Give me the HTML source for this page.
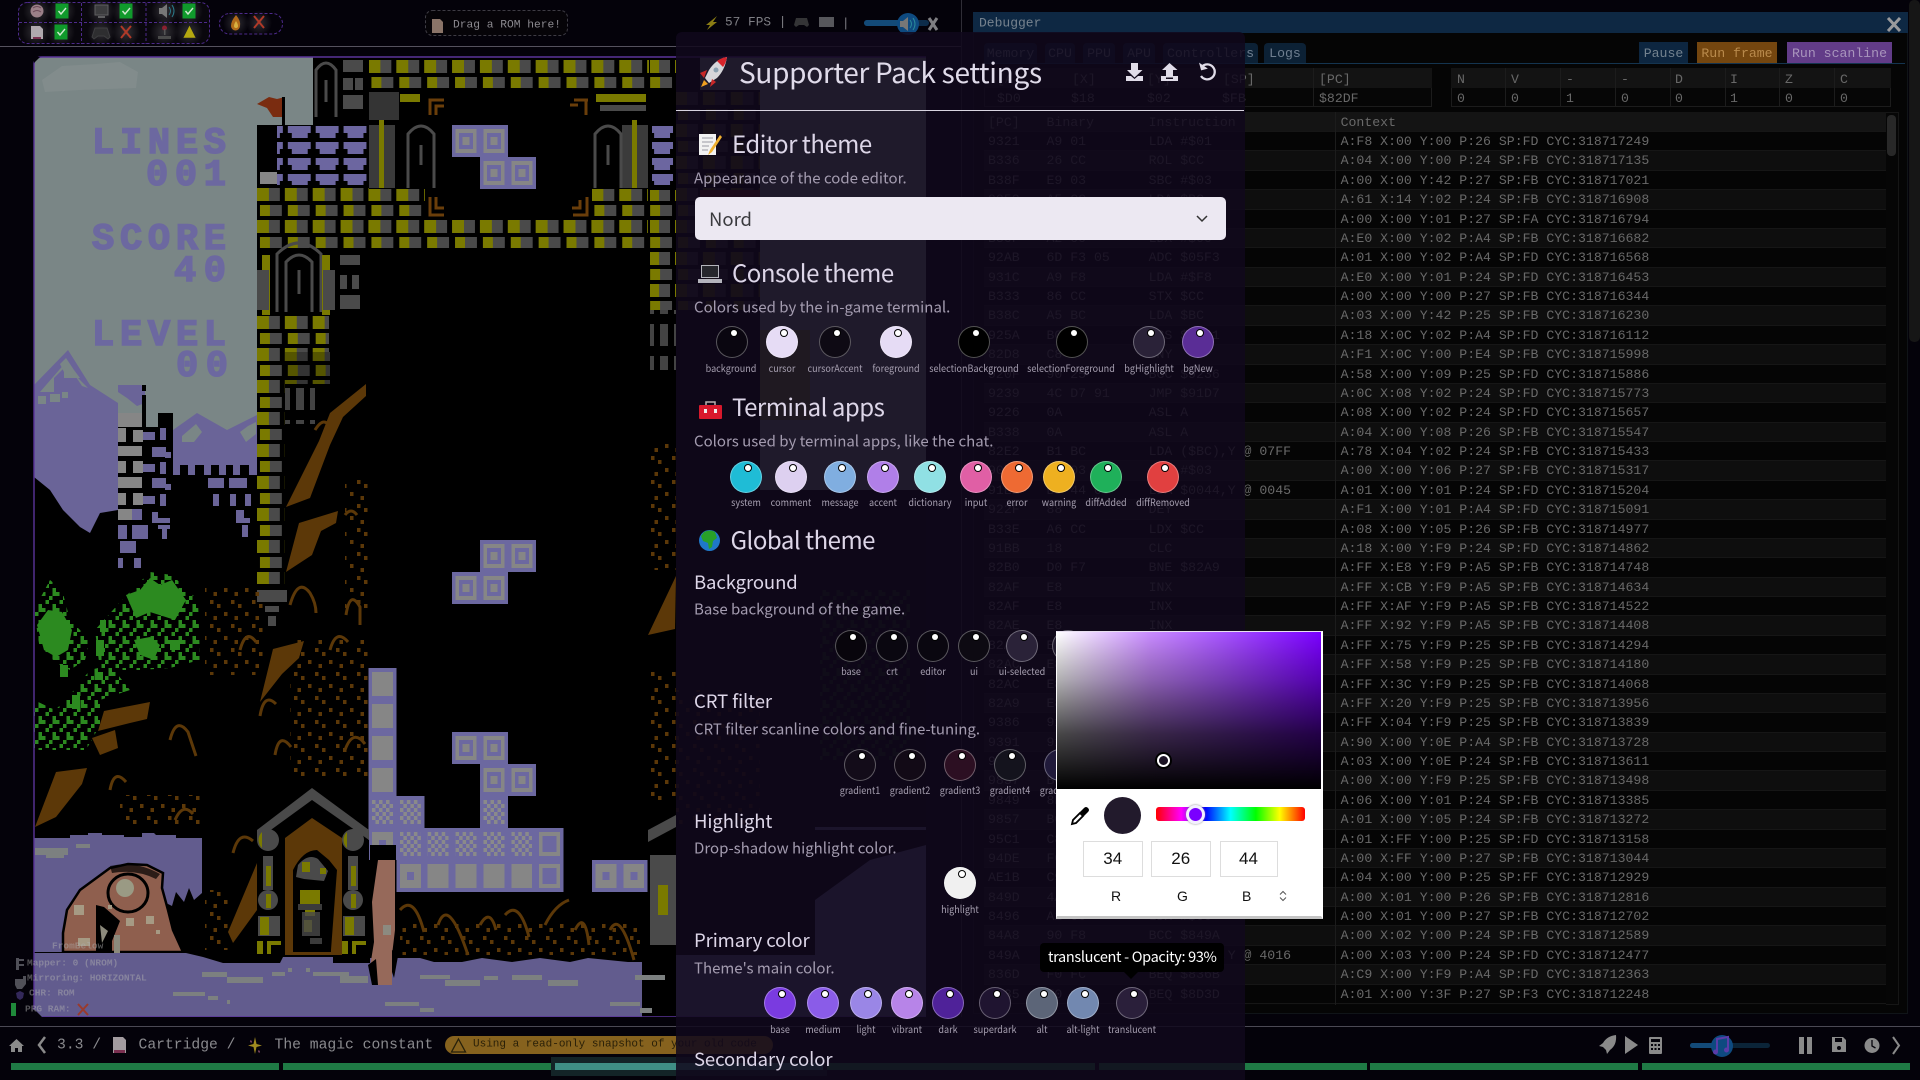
<!DOCTYPE html>
<html><head><meta charset="utf-8"><title>Supporter Pack settings</title>
<style>
*{box-sizing:border-box}
html,body{margin:0;padding:0;width:1920px;height:1080px;overflow:hidden;background:#04020a}
body{position:relative;font-family:"Liberation Sans",sans-serif}
.t{position:absolute;white-space:nowrap;line-height:1;transform:translateY(-50%)}
.m{font-family:"Liberation Mono",monospace}
.n{font-family:"Noto Sans CJK JP","Liberation Sans",sans-serif}
.a{position:absolute}
#dbg{left:973px;top:12px;width:935px;height:1002px;background:#050505;border:1px solid #101418}
#dbgtitle{left:973px;top:12px;width:935px;height:21px;background:#0e2843}
.tab{position:absolute;top:43px;height:20px;background:#0c2135;color:#6f7f90;font:13.2px/22px "Liberation Mono",monospace;text-align:center;border-radius:4px 4px 0 0}
.btn{position:absolute;top:42px;height:21px;font:13.2px/23px "Liberation Mono",monospace;text-align:center}
.reg{position:absolute;font:13.2px/14px "Liberation Mono",monospace;color:#686868;white-space:nowrap}
#log{position:absolute;left:984px;top:112px;width:902px;height:893px;background:#060606;font:13.2px/19.38px "Liberation Mono",monospace;color:#696969;overflow:hidden}
.r{position:relative;height:19.38px;border-bottom:1px solid #161616;background:#050505;white-space:pre}
.r:nth-child(odd){background:#0e0e0e}
.r b{font-weight:normal;position:absolute;top:0}
.r b:nth-child(1){left:4px}.r b:nth-child(2){left:62.5px}.r b:nth-child(3){left:164.6px}.r b:nth-child(4){left:356.6px}
#modal{position:absolute;left:676px;top:32px;width:568.5px;height:1048px;background:rgba(16,8,28,.86);border-radius:6px 6px 0 0}
.s{position:absolute;width:32px;height:32px;border-radius:50%;transform:translate(-50%,-50%);border:1px solid rgba(255,255,255,.32)}
.s::after{content:"";position:absolute;left:13.5px;top:3px;width:6px;height:6px;border-radius:50%;background:#fff;box-shadow:0 0 0 1px #000}
.l{position:absolute;transform:translate(-50%,-50%) scaleX(.88);white-space:nowrap;font:10.3px/1 "Noto Sans CJK JP","Liberation Sans",sans-serif;color:#a69fb0}
.h2{color:#ddd6e8;font-size:24px;letter-spacing:-.5px}
.h3{color:#ddd6e8;font-size:18.5px;letter-spacing:-.1px}
.d{color:#a49cb0;font-size:15px}
#picker{position:absolute;left:1056px;top:631px;width:266.5px;height:288px;background:#fff;border-left:1px solid #fff;border-right:2px solid #fff;border-bottom:3px solid #c4c4c4;border-top:1px solid #e8e0f0}
.in{position:absolute;top:841px;height:36px;border:1px solid #ddd;background:#fff;color:#111;font:17px/34px "Liberation Sans",sans-serif;text-align:center}
.g{position:absolute;white-space:nowrap;line-height:1;transform:translateY(-50%);font-family:"Liberation Mono",monospace;font-size:9.5px;font-weight:bold;color:rgba(175,175,175,.48)}
</style></head><body>

<svg class="a" style="left:0;top:0" width="1920" height="1080" viewBox="0 0 1920 1080">
<defs>
<radialGradient id="glow"><stop offset="0" stop-color="#fff" stop-opacity=".17"/><stop offset="1" stop-color="#fff" stop-opacity="0"/></radialGradient>
<pattern id="brick" patternUnits="userSpaceOnUse" width="27.87" height="32" patternTransform="translate(34,57)" shape-rendering="crispEdges">
<rect x="0" y="3" width="12" height="13" fill="#7a7a00"/><rect x="12" y="3" width="11" height="13" fill="#4a4a4a"/>
<rect x="3" y="20" width="10" height="11" fill="#7a7a00"/><rect x="13" y="20" width="12" height="11" fill="#4a4a4a"/>
</pattern>
<pattern id="lil" patternUnits="userSpaceOnUse" width="27.87" height="16" patternTransform="translate(34,125)" shape-rendering="crispEdges">
<rect x="3" y="1" width="23" height="7" fill="#6c66a0"/><rect x="7" y="8" width="16" height="5" fill="#6c66a0"/>
</pattern>
<pattern id="chk" patternUnits="userSpaceOnUse" width="7" height="8" shape-rendering="crispEdges">
<rect width="3.5" height="4" fill="#8a8a8a"/><rect x="3.5" y="4" width="3.5" height="4" fill="#8a8a8a"/>
</pattern>
<pattern id="gsp" patternUnits="userSpaceOnUse" width="14" height="16" shape-rendering="crispEdges">
<rect x="0" y="0" width="3.5" height="4" fill="#2c8a20"/><rect x="7" y="4" width="3.5" height="4" fill="#2c8a20"/><rect x="3.5" y="8" width="3.5" height="4" fill="#2c8a20"/><rect x="10.5" y="12" width="3.5" height="4" fill="#2c8a20"/><rect x="10.5" y="0" width="3.5" height="4" fill="#2c8a20"/>
</pattern>
<pattern id="bsp" patternUnits="userSpaceOnUse" width="21" height="24" shape-rendering="crispEdges">
<rect x="0" y="0" width="3.5" height="4" fill="#5c3808"/><rect x="7" y="4" width="3.5" height="4" fill="#5c3808"/><rect x="14" y="12" width="3.5" height="4" fill="#5c3808"/><rect x="3.5" y="16" width="3.5" height="4" fill="#5c3808"/>
</pattern>
<pattern id="gsq" patternUnits="userSpaceOnUse" width="14" height="32" shape-rendering="crispEdges">
<rect x="2" y="4" width="8" height="22" fill="#4a4a4a" opacity=".9"/>
</pattern>
<g id="A" shape-rendering="crispEdges"><rect width="27.87" height="32" fill="#6c68a0"/><rect x="3.5" y="4" width="20.9" height="24" fill="#868686"/><rect x="7" y="8" width="13.9" height="16" fill="#6c68a0"/><rect x="10.5" y="12" width="7" height="8" fill="#868686"/></g>
<g id="B" shape-rendering="crispEdges"><rect width="27.87" height="32" fill="#6c68a0"/><rect x="3.5" y="4" width="20.9" height="24" fill="#868686"/></g>
<g id="C" shape-rendering="crispEdges"><rect width="27.87" height="32" fill="#6c68a0"/><rect x="3.5" y="4" width="20.9" height="24" fill="url(#chk)"/></g>
<g id="D" shape-rendering="crispEdges"><rect width="27.87" height="32" fill="#6c68a0"/><rect x="3.5" y="4" width="20.9" height="24" fill="#868686"/><rect x="10.5" y="12" width="7" height="8" fill="#6c68a0"/></g>
<g id="E" shape-rendering="crispEdges"><rect width="27.87" height="32" fill="#6c68a0"/><rect x="3.5" y="4" width="20.9" height="24" fill="#868686"/><rect x="7" y="8" width="13.9" height="16" fill="#6c68a0"/></g>
<g id="chkbox"><rect x="-6.5" y="-7.5" width="13" height="15" fill="#109a2c"/><path d="M-3.5 0l2.5 3 5-6" fill="none" stroke="#cfe8d0" stroke-width="1.4"/></g>
<g id="xx"><path d="M-5 -6L5 6M5 -6L-5 6" stroke="#b03a28" stroke-width="2"/></g>
</defs>

<!-- GAME -->
<g>
<rect x="34" y="57" width="892" height="960" fill="#000"/>
<rect x="34" y="57" width="279" height="68" fill="#7a8686"/>
<rect x="34" y="125" width="223" height="340" fill="#7a8686"/>
<!-- under-modal -->
<rect x="700" y="57" width="226" height="33" fill="#7a8686"/>
<rect x="760" y="90" width="166" height="400" fill="#7a8686"/>
<rect x="815" y="827" width="111" height="190" fill="#5e5a85"/>
<rect x="676" y="955" width="250" height="62" fill="#5e5a85"/>
<path d="M815 900L870 860L926 845V830H815z" fill="#000"/>
<rect x="676" y="690" width="84" height="137" fill="url(#bsp)" opacity=".6"/>
<rect x="676" y="90" width="84" height="220" fill="url(#brick)" opacity=".6"/>
<rect x="700" y="190" width="60" height="40" fill="#5c1a10"/>
<rect x="760" y="330" width="50" height="90" fill="#7a7a00" opacity=".5"/>
<rect x="820" y="590" width="90" height="170" fill="url(#gsp)" opacity=".35"/>
<!-- faint logo -->
<path d="M42 80L62 66L96 64L120 62L138 72L136 88L80 90L45 92z" fill="#828c8c"/>

<!-- left mountain -->
<path d="M34 385L68 350L90 385L118 403V510L100 513L90 533L80 527L63 510L50 490L34 477z" fill="#6a6498"/>
<path d="M40 392h14v-14l10-10 10 6 8 12 6 2-10-10-8-10-4-6z" fill="#7a8686"/>
<path d="M60 364l6-6 8 12 6 8h-16v-6zM38 396h8v8h-8zM50 394h10v8h-10zM62 392h6v6h-6z" fill="#7a8686"/>
<!-- right mountain -->
<path d="M173 430L197 413L227 430L257 415V465H173z" fill="#6a6498"/>
<path d="M182 436l14-12 6 8-8 10h-12zM240 432l8-6 8-4v12l-10 8z" fill="#7a8686"/>
<path d="M173 465h7v10h-7zM188 465h7v10h-7zM204 465h7v10h-7zM219 465h7v10h-7zM233 465h7v10h-7zM249 465h8v10h-8z" fill="#6a6498"/>
<rect x="173" y="475" width="84" height="155" fill="#000"/>
<!-- tower -->
<path d="M118 427h40v-14h15v62h-55z" fill="#000"/>
<rect x="118" y="475" width="55" height="95" fill="#000"/>
<path d="M118 385h23l4 4v14l-8 3-10-8-9-6z" fill="#6a6498"/>
<rect x="142" y="385" width="4" height="6" fill="#000"/><rect x="142" y="395" width="4" height="32" fill="#000"/>
<rect x="118" y="413" width="24" height="14" fill="#868686"/>
<g shape-rendering="crispEdges" fill="#868686">
<path d="M118 428h8v14h-8zM133 430h10v12h-10zM118 446h24v10h-24zM118 461h8v12h-8zM133 461h10v12h-10zM118 477h24v11h-24zM118 493h8v12h-8zM133 493h10v12h-10zM118 509h14v11h-14z"/>
</g>
<g shape-rendering="crispEdges" fill="#6a6498">
<path d="M143 432h12v8h-12zM160 428h6v12h-6zM152 447h14v10h-14zM165 452h6v6h-6zM143 464h12v8h-12zM160 462h6v12h-6zM152 478h14v10h-14zM165 484h6v6h-6zM143 496h12v8h-12zM160 494h6v12h-6zM132 509h10v11h-10zM152 512h6v8h-6zM152 518h18v5h-18z"/>
<path d="M118 525h9v14h-9zM132 525h16v14h-16zM158 525h12v4h-12zM162 529h5v10h-5zM120 541h16v12h-16zM118 558h5v10h-5zM134 558h7v10h-7z"/>
<path d="M208 478h16v10h-16zM229 478h18v10h-18zM213 494h6v12h-6zM230 494h6v12h-6zM245 494h6v12h-6zM236 510h8v10h-8zM236 518h14v5h-14zM242 525h6v12h-6z"/>
</g>
<!-- olive column -->
<rect x="257" y="188" width="112" height="62" fill="url(#brick)"/>
<rect x="257" y="250" width="112" height="62" fill="#000"/>
<rect x="257" y="312" width="72" height="40" fill="url(#brick)"/>
<rect x="257" y="352" width="28" height="232" fill="url(#brick)"/>
<rect x="285" y="352" width="45" height="32" fill="url(#brick)" opacity=".7"/>
<rect x="285" y="384" width="30" height="40" fill="url(#gsq)"/>
<rect x="257" y="590" width="30" height="12" fill="#4a4a4a"/><rect x="265" y="606" width="14" height="6" fill="#4a4a4a"/><rect x="268" y="616" width="8" height="10" fill="#4a4a4a"/>
<!-- arch left -->
<g fill="none" stroke="#4a4a4a" stroke-width="3"><path d="M286 312V262q13-14 26 0v50"/><path d="M277 312V254q22-22 44 0v58"/><path d="M299 270v24"/></g>
<path d="M262 255h8v60h-8zM322 255h8v60h-8z" fill="#7a7a00"/><path d="M257 270h12v40h-12zM323 270h12v40h-12z" fill="#4a4a4a"/>
<rect x="340" y="255" width="20" height="10" fill="#4a4a4a"/><rect x="340" y="275" width="7" height="14" fill="#4a4a4a"/><rect x="352" y="275" width="7" height="14" fill="#4a4a4a"/><rect x="340" y="295" width="20" height="14" fill="#4a4a4a"/>
<!-- upper arch -->
<g fill="none" stroke="#4a4a4a" stroke-width="3"><path d="M316 117V70q10-14 20 0v47"/><path d="M408 188V134q13-16 26 0v54"/><path d="M595 188V134q13-16 26 0v54"/><path d="M326 80v22M421 145v20M608 145v20"/></g>
<rect x="343" y="60" width="20" height="12" fill="#4a4a4a"/><rect x="343" y="78" width="10" height="12" fill="#4a4a4a"/><rect x="355" y="78" width="8" height="12" fill="#4a4a4a"/><rect x="343" y="95" width="20" height="14" fill="#4a4a4a"/>
<rect x="369" y="125" width="26" height="63" fill="#4a4a4a" opacity=".8"/><rect x="379" y="120" width="5" height="68" fill="#7a7a00"/>
<rect x="622" y="125" width="26" height="63" fill="#4a4a4a" opacity=".8"/><rect x="632" y="120" width="5" height="68" fill="#7a7a00"/>
<rect x="369" y="92" width="30" height="28" fill="#4a4a4a" opacity=".7"/><rect x="400" y="94" width="20" height="8" fill="#7a7a00"/>
<rect x="596" y="94" width="50" height="8" fill="#7a7a00"/><rect x="600" y="105" width="46" height="6" fill="#4a4a4a"/>
<!-- bricks -->
<rect x="369" y="57" width="280" height="33" fill="url(#brick)"/>
<rect x="369" y="189" width="56" height="28" fill="url(#brick)"/><rect x="592" y="189" width="56" height="28" fill="url(#brick)"/>
<rect x="343" y="220" width="305" height="30" fill="url(#brick)"/>
<rect x="650" y="57" width="26" height="32" fill="url(#brick)"/>
<rect x="650" y="190" width="26" height="120" fill="url(#brick)"/>
<path d="M652 125h24v16h-24zM652 141h24v16h-24zM652 157h24v16h-24zM652 173h24v12h-24z" fill="url(#lil)"/>
<rect x="650" y="310" width="26" height="60" fill="url(#gsq)"/>
<!-- corner ornaments -->
<g fill="none" stroke="#6a3e0a" stroke-width="3"><path d="M430 115V100h14M436 115v-9h8M588 100h-14M586 100v15M570 105h8M430 197v18h14M436 197v11h8M587 197v18h-14M580 200v8h-8"/></g>
<!-- roof -->
<rect x="277" y="125" width="92" height="60" fill="url(#lil)"/>
<path d="M277 185h-14l6-22 8-12z" fill="#000"/>
<rect x="260" y="172" width="17" height="12" fill="#868686"/>
<!-- flag -->
<path d="M257 104l12-7 8 2 8-2v20h-12l-6-9z" fill="#7a2c10"/><rect x="282" y="97" width="3" height="28" fill="#000"/>

<!-- pieces -->
<use href="#A" x="452" y="125"/><use href="#A" x="480" y="125"/><use href="#A" x="480" y="157"/><use href="#A" x="508" y="157"/>
<use href="#A" x="480" y="540"/><use href="#A" x="508" y="540"/><use href="#A" x="452" y="572"/><use href="#A" x="480" y="572"/>
<use href="#A" x="452" y="732"/><use href="#A" x="480" y="732"/><use href="#A" x="480" y="764"/><use href="#A" x="508" y="764"/>
<use href="#B" x="368.5" y="668"/><use href="#B" x="368.5" y="700"/><use href="#B" x="368.5" y="732"/><use href="#B" x="368.5" y="764"/>
<use href="#C" x="368.5" y="796"/><use href="#C" x="396.4" y="796"/><use href="#C" x="480" y="796"/>
<use href="#D" x="368.5" y="828"/><use href="#C" x="396.4" y="828"/><use href="#C" x="424.2" y="828"/><use href="#C" x="452.1" y="828"/><use href="#C" x="480" y="828"/><use href="#C" x="507.8" y="828"/><use href="#E" x="535.7" y="828"/>
<use href="#D" x="396.4" y="860"/><use href="#B" x="424.2" y="860"/><use href="#B" x="452.1" y="860"/><use href="#B" x="480" y="860"/><use href="#B" x="507.8" y="860"/><use href="#E" x="535.7" y="860"/>
<use href="#D" x="592" y="860"/><use href="#D" x="619.8" y="860"/>

<!-- foliage -->
<path d="M34 610L50 580L62 590L70 620L90 640L85 660L70 670L60 665L40 650z" fill="url(#gsp)"/>
<path d="M122 600L150 572L172 575L198 600L200 660L170 668L140 670L100 670L95 630z" fill="url(#gsp)"/>
<path d="M90 670L110 665L130 690L100 700L100 725L86 750L34 750L34 700L55 710L66 700z" fill="url(#gsp)"/>
<path d="M37 625L48 610L62 612L72 630L68 650L56 657L44 650zM126 595L140 590L150 578L160 585L172 580L186 600L175 620L150 612L136 618zM134 640L150 637L160 645L154 660L140 655zM100 620h6v12h-6z" fill="#2c8a20"/>
<path d="M60 665h8v12h-8zM96 640h8v16h-8zM95 672h8v8h-8zM170 640h10v10h-10zM72 695h8v14h-8z" fill="#2c8a20"/>

<!-- roots -->
<g fill="#5c3808">
<path d="M366 384L330 413L319 441L286 507L310 498L330 445L343 417L366 396z"/>
<path d="M338 511L299 523L286 572L312 555L321 531L336 523z"/>
<path d="M304 641L273 649L260 702L282 674L299 658z"/>
<path d="M150 702L104 711L98 731L130 723L147 719z"/>
<path d="M87 768L56 772L35 827L56 817L82 784z"/>
<path d="M676 576L648 635L675 629z"/>
<path d="M115 730L92 738L100 755L118 748z"/>
</g>
<g fill="none" stroke="#5c3808" stroke-width="3">
<path d="M290 605q8-28 20-12 6 10 6 20M346 615q4-26 14-8v18M260 716q4-24 16-12M330 650q6-22 18-8M275 755q4-24 16-8M345 750q8-22 20-6M170 740q6-24 18-8l8 24M110 790q4-22 16-8M240 650q6-22 16-8M175 820q8-18 18-6M315 430q10-16 16 0M345 515q6-8 12 0M233 853q6-24 20-12"/>
<path d="M400 910q14-16 24 22M438 925q10-30 30 30M480 925q10-18 16 5M505 915q14-16 24 22M545 925q10-20 24-25M575 930q10-20 14 15M610 930q10-20 24 30"/>
</g>
<rect x="205" y="585" width="60" height="90" fill="url(#bsp)"/>
<rect x="290" y="640" width="78" height="140" fill="url(#bsp)"/>
<rect x="120" y="795" width="80" height="30" fill="url(#bsp)"/>
<rect x="650" y="440" width="26" height="130" fill="url(#bsp)"/>
<rect x="650" y="670" width="26" height="130" fill="url(#bsp)"/>
<rect x="345" y="480" width="25" height="130" fill="url(#bsp)"/>
<rect x="400" y="920" width="240" height="35" fill="url(#bsp)"/>
<rect x="205" y="890" width="24" height="60" fill="url(#bsp)"/>

<!-- snow & monster -->
<path d="M34 838H70v-3h18v-2h14v2h22v2h18v-4h12l2 2h20v3h26V893l-8 7-5-12-5 14-8-10-4 14-8-4v50H34z" fill="#625c8e"/>
<path d="M35 848h33v7H35zM46 855h18v3H46zM76 844h14v4H76z" fill="#7c8080"/>
<path d="M63 952L63 933L67 910L80 890L110 868L128 864L147 865L163 873L162 888L168 910L173 930L183 952z" fill="#8f5f4e" stroke="#000" stroke-width="2.500"/>
<ellipse cx="128" cy="893" rx="20" ry="19" fill="none" stroke="#000" stroke-width="3"/>
<ellipse cx="125" cy="888" rx="9" ry="9" fill="#9a9a84"/>
<path d="M110 866q25-6 50 8l-4 5q-20-10-44-6z" fill="#000" opacity=".7"/>
<path d="M96 905l8 2 16 14-8 20v12h-16z" fill="#000"/>
<path d="M100 925l8 6-6 12zM114 935h6v18h-6z" fill="#8c8a7c"/>
<path d="M74 905h10v10H74zM78 938h12v8H78zM126 918h8v8h-8zM146 916h8v8h-8zM156 930h4v4h-4zM108 905h4v4h-4z" fill="#a69a84"/>
<!-- gate -->
<path d="M257 830L312 788L369 830v10L312 800L257 840z" fill="#4a4a4a"/>
<path d="M285 955V838L312 818L342 838V955z" fill="#5c3808"/>
<rect x="257" y="840" width="28" height="115" fill="#000"/><rect x="342" y="840" width="27" height="115" fill="#000"/>
<circle cx="268" cy="840" r="11" fill="#4a4a4a"/><circle cx="353" cy="840" r="11" fill="#4a4a4a"/>
<path d="M262 832a11 11 0 0 0 0 16z" fill="#7a7a00"/><path d="M347 832a11 11 0 0 0 0 16z" fill="#7a7a00"/>
<path d="M263 856h10v34h-10zM348 856h10v34h-10z" fill="#4a4a4a"/>
<path d="M266 866h5v20h-5zM351 866h5v20h-5z" fill="#7a7a00"/>
<circle cx="268" cy="900" r="10" fill="#4a4a4a"/><circle cx="353" cy="900" r="10" fill="#4a4a4a"/>
<path d="M266 894h5v14h-5zM351 894h5v14h-5z" fill="#7a7a00"/>
<rect x="258" y="916" width="22" height="20" fill="#4a4a4a"/><rect x="343" y="916" width="22" height="20" fill="#4a4a4a"/>
<path d="M260 917h9v18h-9zM345 917h9v18h-9z" fill="#7a7a00"/>
<path d="M257 941h6v13h-6zM267 941h14v4h-14zM267 945h4v9h-4zM342 941h6v13h-6zM352 941h14v4h-14zM352 945h4v9h-4z" fill="#7a7a00"/>
<path d="M293 952V870q10-20 24-20l12 10 8 10-6 80v2z" fill="#000"/>
<path d="M298 865q10-12 20-6l10 12-4 10-20-2-8-2z" fill="#4a4a4a"/>
<path d="M302 862h8v10h-8zM320 868h6v6h-6zM300 890h20v14h-20zM305 910h10v6h-10zM304 920h8v12h-8z" fill="#7a7a00"/>
<path d="M298 904h24v6h-24zM302 912h18v24h-18zM310 938h12v6h-12z" fill="#4a4a4a" opacity=".8"/>
<path d="M228 932L257 863V910L233 943z" fill="#5c3808"/>
<rect x="650" y="855" width="26" height="90" fill="#4a4a4a"/><rect x="658" y="885" width="10" height="30" fill="#7a7a00"/><path d="M648 830l28-15v12l-28 15z" fill="#4a4a4a"/>
<!-- ground -->
<path d="M34 953H186l17 4 20 6h57l3-6h50v6h37v-5h50l14 4h28l20-4 30 4 28-4 30 4 18-4 40 4h14V1017H34z" fill="#625c8e"/>
<path d="M202 972h25v5h-25zM227 977h36v6h-36zM272 972h13v4h-13zM173 992h32v4h-32zM208 996h10v4h-10zM227 1000h3v4h-3zM288 968h4v4h-4zM306 968h4v4h-4zM313 972h36v4h-36zM340 976h28v7h-28zM385 1002h34v4h-34zM420 1008h14v4h-14zM420 975h30v4h-30zM445 980h35v6h-35zM484 976h14v4h-14zM512 975h30v5h-30zM548 980h30v6h-30zM610 1002h30v4h-30zM640 1008h12v5h-12zM635 975h30v5h-30z" fill="#7c8080"/>
<!-- trunk -->
<path d="M378 860h17v70l-3 25v30h-14l-8-18 4-25-2-40z" fill="#96695a"/>
<path d="M368 965l8-6 2 26h-6zM392 950l6 6-4 22-2-6z" fill="#000"/>
<rect x="383" y="925" width="8" height="10" fill="#8c8a80"/>
<rect x="370" y="845" width="26" height="15" fill="#000"/>
<!-- canvas edge -->
<path d="M34 1010V65Q34 57 42 57H926M42 1017H926" fill="none" stroke="#5b349a" stroke-width="1.4"/>
<path d="M34 1017h8l-8-8z" fill="#04020a"/><path d="M34 57h6l-6 6z" fill="#04020a"/>
<!-- pixel-style score text -->
<g font-family="Liberation Mono,monospace" font-weight="bold" fill="#6c68a0" stroke="#6c68a0" stroke-width="1.6" font-size="37">
<text x="92" y="153" textLength="134" lengthAdjust="spacing">LINES</text>
<text x="146" y="185" textLength="80" lengthAdjust="spacing">001</text>
<text x="92" y="249" textLength="134" lengthAdjust="spacing">SCORE</text>
<text x="174" y="281" textLength="52" lengthAdjust="spacing">40</text>
<text x="92" y="345" textLength="134" lengthAdjust="spacing">LEVEL</text>
<text x="176" y="376" textLength="52" lengthAdjust="spacing">00</text>
</g>
</g>

<!-- TOP BAR -->
<rect x="0" y="0" width="961" height="46" fill="#04020a"/>
<rect x="0" y="46" width="961" height="1" fill="#55525e"/>
<rect x="18" y="2" width="192" height="42" rx="9" fill="#09070d"/>
<g fill="url(#glow)"><circle cx="37" cy="11" r="14"/><circle cx="62" cy="11" r="14"/><circle cx="101" cy="11" r="14"/><circle cx="126" cy="11" r="14"/><circle cx="165" cy="11" r="14"/><circle cx="189" cy="11" r="14"/><circle cx="36" cy="32" r="14"/><circle cx="61" cy="32" r="14"/><circle cx="101" cy="32" r="14"/><circle cx="126" cy="32" r="14"/><circle cx="164" cy="32" r="14"/><circle cx="189" cy="32" r="14"/><circle cx="236" cy="23" r="13"/><circle cx="259" cy="23" r="13"/></g>
<g fill="none" stroke="#4d2a8c" stroke-width="1" stroke-dasharray="3 2">
<rect x="18.5" y="2.500" width="191" height="41" rx="9"/>
<path d="M81.5 3V44M146 3V44M19 22.5H209"/>
<rect x="219.5" y="13.500" width="63" height="20.5" rx="10"/>
</g>
<rect x="425.5" y="10.500" width="142" height="25" rx="7" fill="#060408" stroke="#3e3c44" stroke-dasharray="3 2"/>
<circle cx="37" cy="11" r="6.500" fill="#9b8088"/><path d="M33 8q4-3 8 0M33 12q4-3 8 0" stroke="#6b4a58" fill="none"/>
<use href="#chkbox" x="62" y="11"/>
<rect x="95" y="5" width="13" height="10" fill="#3c3c3e" stroke="#5e5e60"/><rect x="98" y="16" width="7" height="2" fill="#5e5e60"/>
<use href="#chkbox" x="126" y="11"/>
<path d="M159 8h3l5-4v14l-5-4h-3z" fill="#777"/><path d="M169 7q3 4 0 8M172 5q4 6 0 12" stroke="#2a7a8a" fill="none"/>
<use href="#chkbox" x="189" y="11"/>
<path d="M31 26h9l3 3v10H31z" fill="#b0a9ae"/><rect x="33" y="37" width="8" height="2" fill="#7a3050"/>
<use href="#chkbox" x="61" y="32"/>
<path d="M95 28h12l3 9-2 2-4-3h-6l-4 3-2-2z" fill="#2e2e30" stroke="#3e3e40"/>
<use href="#xx" x="126" y="32"/>
<circle cx="164.500" cy="28" r="2.500" fill="#8a2030"/><rect x="164" y="29" width="1.500" height="6" fill="#555"/><path d="M158 36h13v3h-13z" fill="#4a4a4a"/>
<path d="M189.500 25l6.500 13h-13z" fill="#b5a810" stroke="#222" stroke-width=".6"/>
<path d="M236 15q5 6 4 11a4.500 4.500 0 0 1-9 0q0-5 5-11z" fill="#b06a1a"/><path d="M236 21q2 3 2 5a2 2 0 0 1-4 0q0-2 2-5z" fill="#d8b040"/>
<use href="#xx" x="259" y="22"/>
<path d="M432 19h8l3 3v11h-11z" fill="#8a7468"/>
<!-- top status icons -->
<path d="M717 16l-11 9h4l-3 5 10-8h-4l4-6z" fill="#8a7c14"/>
<path d="M796 18h11l2 7-2 2-3-2h-5l-3 2-2-2z" fill="#343436"/>
<rect x="819" y="17" width="15" height="10" fill="#57575c"/>
<rect x="864" y="20" width="65" height="6" rx="3" fill="#0d2c4a"/><rect x="864" y="20" width="44" height="6" rx="3" fill="#134a78"/>
<circle cx="908" cy="24" r="11" fill="#0e4a80"/><path d="M900 21h3l5-4v14l-5-4h-3z" fill="#777"/><path d="M910 20q3 4 0 8M913 18q4 6 0 12" stroke="#2a8a9a" fill="none"/>
<path d="M929 18l8 12M937 18l-8 12" stroke="#7e7e82" stroke-width="3"/>
<rect x="961" y="0" width="1" height="1026" fill="#2f2d36"/>

<!-- BOTTOM -->
<rect x="0" y="1017" width="1920" height="63" fill="#04020a"/>
<rect x="0" y="1026" width="1920" height="1" fill="#4b4954"/>
<path d="M9 1046l7.500-7 7.500 7h-2v6h-4v-4h-3v4h-4v-6z" fill="#8a8a8a"/>
<path d="M45 1037l-6 8 6 8" fill="none" stroke="#8a8a8a" stroke-width="2.500"/>
<path d="M113 1037h10l3 3v13h-13z" fill="#a39ca0"/><rect x="114" y="1050" width="11" height="3" fill="#7a3050"/>
<path d="M255 1037l1.500 7 5.500 1.500-5.500 1.500-1.500 7-1.500-7-5.500-1.500 5.500-1.500z" fill="#a08a20"/><path d="M251 1040l1 2-1 1-1-2zM259 1050l1 2-1 1-1-2z" fill="#8a4a70"/>
<rect x="445" y="1036" width="328" height="18" rx="9" fill="#86621e"/>
<path d="M458.500 1039l7 13h-14z" fill="none" stroke="#26200a" stroke-width="1.300"/>
<g>
<rect x="11" y="1063" width="268" height="7" fill="#1f7a45"/><rect x="283" y="1063" width="268" height="7" fill="#1f7a45"/>
<rect x="551" y="1057" width="276" height="19" fill="#3f8a80" opacity=".25"/>
<rect x="555" y="1063" width="268" height="7" fill="#3f8f85"/>
<rect x="827" y="1063" width="268" height="7" fill="#1f7a45"/><rect x="1099" y="1063" width="268" height="7" fill="#1f7a45"/>
<rect x="1370" y="1063" width="268" height="7" fill="#1f7a45"/><rect x="1642" y="1063" width="268" height="7" fill="#1f7a45"/>
</g>
<!-- bottom right icons -->
<path d="M1616 1035q-9 1-13 8l-4 3 4 1 3 3 1 4 3-4q7-5 6-15z" fill="#8a8a8a"/>
<path d="M1625 1036l13 9-13 9z" fill="#8a8a8a"/>
<rect x="1649" y="1037" width="13" height="17" rx="1" fill="#8a8a8a"/><rect x="1651" y="1039" width="9" height="3" fill="#04020a"/><path d="M1651 1044h2v2h-2zM1654.500 1044h2v2h-2zM1658 1044h2v2h-2zM1651 1048h2v2h-2zM1654.500 1048h2v2h-2zM1658 1048h2v2h-2z" fill="#04020a"/>
<rect x="1690" y="1043" width="80" height="5" rx="2.500" fill="#0b2438"/><rect x="1690" y="1043" width="32" height="5" rx="2.500" fill="#134a78"/>
<circle cx="1722" cy="1046" r="11" fill="#0e4a80"/>
<path d="M1717 1052v-13l11-2v13" fill="none" stroke="#5a3ca8" stroke-width="2"/><circle cx="1715.500" cy="1052" r="2.500" fill="#5a3ca8"/><circle cx="1726.500" cy="1050" r="2.500" fill="#5a3ca8"/>
<path d="M1799 1037h5v17h-5zM1807 1037h5v17h-5z" fill="#8a8a8a"/>
<path d="M1832 1037h11l3 3v12h-14z" fill="#8a8a8a"/><rect x="1835" y="1038" width="7" height="4" fill="#04020a"/><circle cx="1839" cy="1048" r="2" fill="#04020a"/>
<circle cx="1872" cy="1045.500" r="7.500" fill="#8a8a8a"/><path d="M1872 1040v6l3.500 2" stroke="#04020a" fill="none" stroke-width="1.300"/>
<path d="M1893 1037l6 8.500-6 8.500" fill="none" stroke="#8a8a8a" stroke-width="2"/>
</svg>

<!-- overlay texts on game -->
<div class="g" style="left:52px;top:946px">FromBelow</div>
<div class="g" style="left:27px;top:963px">Mapper: 0 (NROM)</div>
<div class="g" style="left:27px;top:978px">Mirroring: HORIZONTAL</div>
<div class="g" style="left:29px;top:993px">CHR: ROM</div>
<div class="g" style="left:25px;top:1009px">PRG RAM:</div>
<svg class="a" style="left:8px;top:955px" width="84" height="62"><path d="M8 3h3v12H8zM11 4h5v2h-5zM11 9h5v2h-5z" fill="#505058"/><path d="M7 24h8v-3h3v8l-4 5H9l-2-4z" fill="#505058"/><path d="M8 38l4-2 4 2-1 5-3 2-3-2z" fill="#33285a"/><rect x="3" y="48" width="5" height="13" fill="#1f8a3a"/><path d="M70 49l10 11M80 49l-10 11" stroke="#9a3a2c" stroke-width="2"/></svg>

<!-- top text -->
<div class="t m" style="left:453px;top:26px;font-size:11.250px;color:#8c8a90">Drag a ROM here!</div>
<div class="t m" style="left:725px;top:23px;font-size:12.800px;color:#7e7e84">57 FPS |</div>
<div class="t m" style="left:842px;top:24px;font-size:12.500px;color:#7e7e84">|</div>

<!-- bottom text -->
<div class="t m" style="left:57px;top:1046px;font-size:14.700px;color:#8a8a8e">3.3 /</div>
<div class="t m" style="left:138.500px;top:1046px;font-size:14.700px;color:#8a8a8e">Cartridge /</div>
<div class="t m" style="left:274.500px;top:1046px;font-size:14.700px;color:#8a8a8e">The magic constant</div>
<div class="t m" style="left:473px;top:1045px;font-size:11px;color:#2a2008">Using a read-only snapshot of your old code</div>

<!-- DEBUGGER -->
<div id="dbg" class="a"></div>
<div id="dbgtitle" class="a"></div>
<div class="t m" style="left:979px;top:23px;font-size:13px;color:#76828e">Debugger</div>
<svg class="a" style="left:1886px;top:17px" width="16" height="15"><path d="M2 1l12 13M14 1L2 14" stroke="#9a9a9c" stroke-width="3"/></svg>
<div class="a" style="left:984px;top:63px;width:921px;height:1px;background:#14344f"></div>
<div class="tab" style="left:984px;width:53px">Memory</div>
<div class="tab" style="left:1045px;width:30px">CPU</div>
<div class="tab" style="left:1083px;width:32px">PPU</div>
<div class="tab" style="left:1123px;width:32px">APU</div>
<div class="tab" style="left:1163px;width:95px">Controllers</div>
<div class="tab" style="left:1264px;width:42px">Logs</div>
<div class="btn" style="left:1639px;width:49px;background:#0d2640;color:#73828f">Pause</div>
<div class="btn" style="left:1697px;width:80px;background:#74460f;color:#b98a4c">Run frame</div>
<div class="btn" style="left:1787px;width:105px;background:#623c88;color:#a995bd">Run scanline</div>

<div class="a" style="left:984px;top:68px;width:448px;height:39px;background:#060606;border:1px solid #1c1c1c"></div>
<div class="a" style="left:984px;top:68px;width:448px;height:20px;background:#131313"></div>
<div class="a" style="left:1313px;top:68px;width:1px;height:39px;background:#1c1c1c"></div>
<div class="reg" style="left:997px;top:73px">[A]</div><div class="reg" style="left:1072px;top:73px">[X]</div><div class="reg" style="left:1147px;top:73px">[Y]</div><div class="reg" style="left:1223px;top:73px">[SP]</div><div class="reg" style="left:1319px;top:73px">[PC]</div>
<div class="reg" style="left:997px;top:92px">$D0</div><div class="reg" style="left:1071px;top:92px">$18</div><div class="reg" style="left:1147px;top:92px">$02</div><div class="reg" style="left:1222px;top:92px">$FB</div><div class="reg" style="left:1319px;top:92px">$82DF</div>

<div class="a" style="left:1451px;top:68px;width:440px;height:39px;background:#060606;border:1px solid #1c1c1c"></div>
<div class="a" style="left:1451px;top:68px;width:440px;height:20px;background:#131313"></div>
<div class="a" style="left:1505px;top:68px;width:1px;height:39px;background:#1c1c1c"></div><div class="a" style="left:1560px;top:68px;width:1px;height:39px;background:#1c1c1c"></div><div class="a" style="left:1615px;top:68px;width:1px;height:39px;background:#1c1c1c"></div><div class="a" style="left:1670px;top:68px;width:1px;height:39px;background:#1c1c1c"></div><div class="a" style="left:1725px;top:68px;width:1px;height:39px;background:#1c1c1c"></div><div class="a" style="left:1779px;top:68px;width:1px;height:39px;background:#1c1c1c"></div><div class="a" style="left:1834px;top:68px;width:1px;height:39px;background:#1c1c1c"></div>
<div class="reg" style="left:1457px;top:73px">N</div><div class="reg" style="left:1511px;top:73px">V</div><div class="reg" style="left:1566px;top:73px">-</div><div class="reg" style="left:1621px;top:73px">-</div><div class="reg" style="left:1675px;top:73px">D</div><div class="reg" style="left:1730px;top:73px">I</div><div class="reg" style="left:1785px;top:73px">Z</div><div class="reg" style="left:1840px;top:73px">C</div>
<div class="reg" style="left:1457px;top:92px">0</div><div class="reg" style="left:1511px;top:92px">0</div><div class="reg" style="left:1566px;top:92px">1</div><div class="reg" style="left:1621px;top:92px">0</div><div class="reg" style="left:1675px;top:92px">0</div><div class="reg" style="left:1730px;top:92px">1</div><div class="reg" style="left:1785px;top:92px">0</div><div class="reg" style="left:1840px;top:92px">0</div>

<div class="a" style="left:984px;top:112px;width:915px;height:893px;border:1px solid #161616;background:#060606"></div>
<div id="log">
<div class="r" style="background:#141414;height:20px;line-height:22px"><b>[PC]</b><b>Binary</b><b>Instruction</b><b>Context</b></div>
<div class="r"><b>9321</b><b>A9 01</b><b>LDA #$01</b><b>A:F8 X:00 Y:00 P:26 SP:FD CYC:318717249</b></div>
<div class="r"><b>B336</b><b>26 CC</b><b>ROL $CC</b><b>A:04 X:00 Y:00 P:24 SP:FB CYC:318717135</b></div>
<div class="r"><b>B38F</b><b>E9 03</b><b>SBC #$03</b><b>A:00 X:00 Y:42 P:27 SP:FB CYC:318717021</b></div>
<div class="r"><b>9052</b><b>A5 CC</b><b>LDA $BC</b><b>A:61 X:14 Y:02 P:24 SP:FB CYC:318716908</b></div>
<div class="r"><b>92A1</b><b>A5 03</b><b>LDA $03</b><b>A:00 X:00 Y:01 P:27 SP:FA CYC:318716794</b></div>
<div class="r"><b>B30F</b><b>A2 00</b><b>LDX #$00</b><b>A:E0 X:00 Y:02 P:A4 SP:FB CYC:318716682</b></div>
<div class="r"><b>92AB</b><b>6D F3 05</b><b>ADC $05F3</b><b>A:01 X:00 Y:02 P:A4 SP:FD CYC:318716568</b></div>
<div class="r"><b>931C</b><b>A9 F8</b><b>LDA #$F8</b><b>A:E0 X:00 Y:01 P:24 SP:FD CYC:318716453</b></div>
<div class="r"><b>B333</b><b>86 CC</b><b>STX $CC</b><b>A:00 X:00 Y:00 P:27 SP:FB CYC:318716344</b></div>
<div class="r"><b>B38C</b><b>A5 BC</b><b>LDA $BC</b><b>A:03 X:00 Y:42 P:25 SP:FB CYC:318716230</b></div>
<div class="r"><b>925A</b><b>B0 05</b><b>BCS $9261</b><b>A:18 X:0C Y:02 P:A4 SP:FD CYC:318716112</b></div>
<div class="r"><b>82D8</b><b>C8</b><b>INY</b><b>A:F1 X:0C Y:00 P:E4 SP:FB CYC:318715998</b></div>
<div class="r"><b>920F</b><b>90 25</b><b>BCC $9236</b><b>A:58 X:00 Y:09 P:25 SP:FD CYC:318715886</b></div>
<div class="r"><b>9239</b><b>4C D7 91</b><b>JMP $91D7</b><b>A:0C X:08 Y:02 P:24 SP:FD CYC:318715773</b></div>
<div class="r"><b>9226</b><b>0A</b><b>ASL A</b><b>A:08 X:00 Y:02 P:24 SP:FD CYC:318715657</b></div>
<div class="r"><b>B338</b><b>0A</b><b>ASL A</b><b>A:04 X:00 Y:08 P:26 SP:FB CYC:318715547</b></div>
<div class="r"><b>82E2</b><b>B1 BC</b><b>LDA ($BC),Y @ 07FF</b><b>A:78 X:04 Y:02 P:24 SP:FB CYC:318715433</b></div>
<div class="r"><b>9033</b><b>A9 03</b><b>LDA #$03</b><b>A:00 X:00 Y:06 P:27 SP:FB CYC:318715317</b></div>
<div class="r"><b>91E1</b><b>B9 44 00</b><b>LDA $0044,Y @ 0045</b><b>A:01 X:00 Y:01 P:24 SP:FD CYC:318715204</b></div>
<div class="r"><b>922F</b><b>88</b><b>DEY</b><b>A:F1 X:00 Y:01 P:A4 SP:FD CYC:318715091</b></div>
<div class="r"><b>B33E</b><b>A6 CC</b><b>LDX $CC</b><b>A:08 X:00 Y:05 P:26 SP:FB CYC:318714977</b></div>
<div class="r"><b>91BB</b><b>18</b><b>CLC</b><b>A:18 X:00 Y:F9 P:24 SP:FD CYC:318714862</b></div>
<div class="r"><b>82B0</b><b>D0 F7</b><b>BNE $82A9</b><b>A:FF X:E8 Y:F9 P:A5 SP:FB CYC:318714748</b></div>
<div class="r"><b>82AF</b><b>E8</b><b>INX</b><b>A:FF X:CB Y:F9 P:A5 SP:FB CYC:318714634</b></div>
<div class="r"><b>82AF</b><b>E8</b><b>INX</b><b>A:FF X:AF Y:F9 P:A5 SP:FB CYC:318714522</b></div>
<div class="r"><b>82AE</b><b>E8</b><b>INX</b><b>A:FF X:92 Y:F9 P:A5 SP:FB CYC:318714408</b></div>
<div class="r"><b>82AE</b><b>E8</b><b>INX</b><b>A:FF X:75 Y:F9 P:25 SP:FB CYC:318714294</b></div>
<div class="r"><b>82AC</b><b>E8</b><b>INX</b><b>A:FF X:58 Y:F9 P:25 SP:FB CYC:318714180</b></div>
<div class="r"><b>82AC</b><b>E8</b><b>INX</b><b>A:FF X:3C Y:F9 P:25 SP:FB CYC:318714068</b></div>
<div class="r"><b>82A9</b><b>E8</b><b>INX</b><b>A:FF X:20 Y:F9 P:25 SP:FB CYC:318713956</b></div>
<div class="r"><b>9386</b><b>91 00</b><b>STA ($00),Y</b><b>A:FF X:04 Y:F9 P:25 SP:FB CYC:318713839</b></div>
<div class="r"><b>9391</b><b>91 00</b><b>STA ($00),Y</b><b>A:90 X:00 Y:0E P:A4 SP:FB CYC:318713728</b></div>
<div class="r"><b>9849</b><b>8D 06</b><b>STA $06</b><b>A:03 X:00 Y:0E P:24 SP:FB CYC:318713611</b></div>
<div class="r"><b>9857</b><b>B0 01</b><b>BCS $985A</b><b>A:00 X:00 Y:F9 P:25 SP:FB CYC:318713498</b></div>
<div class="r"><b>9849</b><b>8D 06</b><b>STA $06</b><b>A:06 X:00 Y:01 P:24 SP:FB CYC:318713385</b></div>
<div class="r"><b>9857</b><b>B0 01</b><b>BCS $985A</b><b>A:01 X:00 Y:05 P:24 SP:FB CYC:318713272</b></div>
<div class="r"><b>95C1</b><b>C8</b><b>INY</b><b>A:01 X:FF Y:00 P:25 SP:FD CYC:318713158</b></div>
<div class="r"><b>94DE</b><b>F0 02</b><b>BEQ $94E2</b><b>A:00 X:FF Y:00 P:27 SP:FB CYC:318713044</b></div>
<div class="r"><b>AE1B</b><b>C9 04</b><b>CMP #$04</b><b>A:04 X:00 Y:00 P:25 SP:FF CYC:318712929</b></div>
<div class="r"><b>849D</b><b>4A</b><b>LSR A</b><b>A:00 X:01 Y:00 P:26 SP:FB CYC:318712816</b></div>
<div class="r"><b>8496</b><b>A2 00</b><b>LDX #$00</b><b>A:00 X:01 Y:00 P:27 SP:FB CYC:318712702</b></div>
<div class="r"><b>84A8</b><b>90 F8</b><b>BCC $849A</b><b>A:00 X:02 Y:00 P:24 SP:FB CYC:318712589</b></div>
<div class="r"><b>849A</b><b>B9 16 40</b><b>LDA $4016,Y @ 4016</b><b>A:00 X:03 Y:00 P:24 SP:FD CYC:318712477</b></div>
<div class="r"><b>836D</b><b>F0 FC</b><b>BEQ $836B</b><b>A:C9 X:00 Y:F9 P:A4 SP:FD CYC:318712363</b></div>
<div class="r"><b>8D35</b><b>F0 06</b><b>BEQ $8D3D</b><b>A:01 X:00 Y:3F P:27 SP:F3 CYC:318712248</b></div>
</div>
<div class="a" style="left:1335px;top:112px;width:1px;height:893px;background:#1c1c1c"></div>
<div class="a" style="left:1887px;top:115px;width:9px;height:41px;background:#282828;border-radius:4px"></div>
<div class="a" style="left:1909px;top:0;width:11px;height:342px;background:#161616;border-radius:5px"></div>

<!-- MODAL -->
<div id="modal"></div>
<div class="a" style="left:676px;top:110px;width:568px;height:1px;background:#d8d4e0"></div>

<svg class="a" style="left:698px;top:55px" width="32" height="34" viewBox="0 0 32 34"><path d="M29 2Q18 4 11 15L7 23l4 5 8-5Q27 15 29 2z" fill="#d6d6da"/><path d="M29 2q-6 1-10 4l6 6q3-4 4-10z" fill="#d8232a"/><circle cx="18" cy="15" r="2.500" fill="#8aa0b0"/><path d="M9 15l-7 3 4 5zM14 24l-2 8 6-5z" fill="#c62828"/><path d="M6 25l-3 7 7-3z" fill="#f0a020"/></svg>
<div class="t n" style="left:739px;top:72px;font-size:28px;color:#e0dbea;letter-spacing:-.3px">Supporter Pack settings</div>
<svg class="a" style="left:1125px;top:62px" width="95" height="20" viewBox="0 0 95 20"><path d="M6 1h7v7h4.500L9.500 15.500 2 8h4zM1 14h5l3.500 3 3.500-3h5v5H1z" fill="#e0dce8"/><path d="M41 15.500h7V8h4.500L44.500 1 37 8h4zM36 14h5v3h7v-3h5v5H36z" fill="#e0dce8"/><path d="M77 4.500A7.500 7.500 0 1 1 76 14" fill="none" stroke="#e0dce8" stroke-width="2.300"/><path d="M75 0v8h7z" fill="#e0dce8" transform="rotate(-15 77 4)"/></svg>

<!-- Editor theme -->
<svg class="a" style="left:698px;top:133px" width="24" height="23" viewBox="0 0 24 23"><rect x="1" y="1" width="17" height="21" fill="#f2f2f2"/><path d="M4 5h11M4 9h11M4 13h7M4 17h6" stroke="#9a9aa4"/><path d="M22 2l-10 15-2 5 4-3L24 4z" fill="#f0b030"/></svg>
<div class="t n h2" style="left:732px;top:142.500px">Editor theme</div>
<div class="t n d" style="left:694px;top:177.500px">Appearance of the code editor.</div>
<div class="a" style="left:695px;top:197px;width:531px;height:42.500px;background:#ece8f2;border-radius:5px"></div>
<div class="t n" style="left:709px;top:218.500px;font-size:18.500px;color:#3a3a3e">Nord</div>
<svg class="a" style="left:1195px;top:214px" width="14" height="10"><path d="M2 2l5 5 5-5" fill="none" stroke="#333" stroke-width="1.500"/></svg>

<!-- Console theme -->
<svg class="a" style="left:698px;top:265px" width="24" height="19" viewBox="0 0 24 19"><rect x="3" y="0" width="18" height="13" fill="#b4b4bc"/><rect x="4" y="1" width="16" height="11" fill="#26262c"/><path d="M0 14h24v4H0z" fill="#b4b4bc"/></svg>
<div class="t n h2" style="left:732px;top:271.500px">Console theme</div>
<div class="t n d" style="left:694px;top:306.500px">Colors used by the in-game terminal.</div>
<div class="s" style="left:732px;top:342px;background:#0a0610"></div><div class="s" style="left:782px;top:342px;background:#e6dcf5"></div><div class="s" style="left:835px;top:342px;background:#0e0a14"></div><div class="s" style="left:896px;top:342px;background:#e6dcf5"></div><div class="s" style="left:974px;top:342px;background:#000"></div><div class="s" style="left:1072px;top:342px;background:#000"></div><div class="s" style="left:1149px;top:342px;background:#2a2238"></div><div class="s" style="left:1198px;top:342px;background:#5a2d96"></div>
<div class="l" style="left:731px;top:367.500px">background</div><div class="l" style="left:782px;top:367.500px">cursor</div><div class="l" style="left:835px;top:367.500px">cursorAccent</div><div class="l" style="left:896px;top:367.500px">foreground</div><div class="l" style="left:973.500px;top:367.500px">selectionBackground</div><div class="l" style="left:1071px;top:367.500px">selectionForeground</div><div class="l" style="left:1149px;top:367.500px">bgHighlight</div><div class="l" style="left:1198px;top:367.500px">bgNew</div>

<!-- Terminal apps -->
<svg class="a" style="left:698px;top:400px" width="25" height="20" viewBox="0 0 25 20"><path d="M8 5V2h9v3" fill="none" stroke="#b8b0b0" stroke-width="1.500"/><rect x="1" y="5" width="23" height="14" rx="1" fill="#d8182c"/><rect x="6" y="9" width="3" height="4" fill="#eee"/><rect x="16" y="9" width="3" height="4" fill="#eee"/></svg>
<div class="t n h2" style="left:732px;top:405.500px">Terminal apps</div>
<div class="t n d" style="left:694px;top:440.500px">Colors used by terminal apps, like the chat.</div>
<div class="s" style="left:746px;top:476.500px;background:#1fbcd6"></div><div class="s" style="left:791px;top:476.500px;background:#ddd0f0"></div><div class="s" style="left:840px;top:476.500px;background:#80aee0"></div><div class="s" style="left:883px;top:476.500px;background:#b07fe8"></div><div class="s" style="left:930px;top:476.500px;background:#90e0e4"></div><div class="s" style="left:976px;top:476.500px;background:#e05fa5"></div><div class="s" style="left:1017px;top:476.500px;background:#ee6a33"></div><div class="s" style="left:1059px;top:476.500px;background:#eeb020"></div><div class="s" style="left:1106px;top:476.500px;background:#1fb05a"></div><div class="s" style="left:1163px;top:476.500px;background:#e14040"></div>
<div class="l" style="left:746px;top:501.500px">system</div><div class="l" style="left:791px;top:501.500px">comment</div><div class="l" style="left:840px;top:501.500px">message</div><div class="l" style="left:883px;top:501.500px">accent</div><div class="l" style="left:930px;top:501.500px">dictionary</div><div class="l" style="left:976px;top:501.500px">input</div><div class="l" style="left:1017px;top:501.500px">error</div><div class="l" style="left:1059px;top:501.500px">warning</div><div class="l" style="left:1106px;top:501.500px">diffAdded</div><div class="l" style="left:1163px;top:501.500px">diffRemoved</div>

<!-- Global theme -->
<svg class="a" style="left:698px;top:529px" width="23" height="23" viewBox="0 0 23 23"><circle cx="11.500" cy="11.500" r="10.500" fill="#1f78c8"/><path d="M6 3q6-3 11 0l2 6-4 3-1 6-3 2-1-6-5-2-2-5z" fill="#28a028"/></svg>
<div class="t n h2" style="left:730.500px;top:538.500px">Global theme</div>
<div class="t n h3" style="left:694px;top:581.500px">Background</div>
<div class="t n d" style="left:694px;top:609px">Base background of the game.</div>
<div class="s" style="left:851px;top:646px;background:#08050c"></div><div class="s" style="left:892px;top:646px;background:#0a0710"></div><div class="s" style="left:933px;top:646px;background:#0a0710"></div><div class="s" style="left:974px;top:646px;background:#0d0a12"></div><div class="s" style="left:1022px;top:646px;background:#2a2238"></div><div class="s" style="left:1068px;top:646px;background:#201a2c"></div>
<div class="l" style="left:850.500px;top:670.500px">base</div><div class="l" style="left:892px;top:670.500px">crt</div><div class="l" style="left:933px;top:670.500px">editor</div><div class="l" style="left:973.500px;top:670.500px">ui</div><div class="l" style="left:1021.500px;top:670.500px">ui-selected</div><div class="l" style="left:1065px;top:670.500px">text</div>

<div class="t n h3" style="left:694px;top:700.500px">CRT filter</div>
<div class="t n d" style="left:694px;top:729px">CRT filter scanline colors and fine-tuning.</div>
<div class="s" style="left:860px;top:765px;background:#130c19"></div><div class="s" style="left:910px;top:765px;background:#120a16"></div><div class="s" style="left:960px;top:765px;background:#2c0f22"></div><div class="s" style="left:1010px;top:765px;background:#14131d"></div><div class="s" style="left:1060px;top:765px;background:#201a3a"></div>
<div class="l" style="left:859.500px;top:789.500px">gradient1</div><div class="l" style="left:909.500px;top:789.500px">gradient2</div><div class="l" style="left:960px;top:789.500px">gradient3</div><div class="l" style="left:1010px;top:789.500px">gradient4</div><div class="l" style="left:1060px;top:789.500px">gradient5</div>

<div class="t n h3" style="left:694px;top:820.500px">Highlight</div>
<div class="t n d" style="left:694px;top:848px">Drop-shadow highlight color.</div>
<div class="s" style="left:960px;top:883px;background:#f0f0f0"></div>
<div class="l" style="left:960px;top:908.500px">highlight</div>

<div class="t n h3" style="left:694px;top:939.500px">Primary color</div>
<div class="t n d" style="left:694px;top:967.500px">Theme's main color.</div>
<div class="s" style="left:780px;top:1003px;background:#7a3be0"></div><div class="s" style="left:823px;top:1003px;background:#8a5ce8"></div><div class="s" style="left:866px;top:1003px;background:#9a86e6"></div><div class="s" style="left:907px;top:1003px;background:#b784e8"></div><div class="s" style="left:948px;top:1003px;background:#4f2299"></div><div class="s" style="left:995px;top:1003px;background:#1f1430"></div><div class="s" style="left:1042px;top:1003px;background:#5c6578"></div><div class="s" style="left:1083px;top:1003px;background:#7288b0"></div><div class="s" style="left:1132px;top:1003px;background:#2a1f3a"></div>
<div class="l" style="left:780px;top:1028.500px">base</div><div class="l" style="left:823px;top:1028.500px">medium</div><div class="l" style="left:866px;top:1028.500px">light</div><div class="l" style="left:907px;top:1028.500px">vibrant</div><div class="l" style="left:948px;top:1028.500px">dark</div><div class="l" style="left:995px;top:1028.500px">superdark</div><div class="l" style="left:1042px;top:1028.500px">alt</div><div class="l" style="left:1083px;top:1028.500px">alt-light</div><div class="l" style="left:1132px;top:1028.500px">translucent</div>

<div class="t n h3" style="left:694px;top:1058.500px">Secondary color</div>

<!-- Picker -->
<div id="picker">
<div class="a" style="left:0;top:0;right:0;height:157px;background:linear-gradient(to top,#000 0,rgba(0,0,0,.72) 35%,rgba(0,0,0,.3) 70%,rgba(0,0,0,0) 100%),linear-gradient(to right,#fff 0,#c98cff 35%,#a855ff 62%,#7a00ff 100%)"></div>
</div>
<div class="a" style="left:1156.500px;top:753.500px;width:13px;height:13px;border:2px solid #fff;border-radius:50%;box-shadow:0 0 0 2px #000"></div>
<svg class="a" style="left:1070px;top:806px" width="20" height="20" viewBox="0 0 20 20"><path d="M2 18l1-4 7-7 3 3-7 7z" fill="none" stroke="#000" stroke-width="1.800"/><path d="M10 6l4-4q2-2 4 0t0 4l-4 4z" fill="#000"/></svg>
<div class="a" style="left:1104px;top:797px;width:37px;height:37px;border-radius:50%;background:#221a2c"></div>
<div class="a" style="left:1156px;top:807px;width:149px;height:14px;border-radius:3px;background:linear-gradient(to right,#f00 0,#f0f 17%,#00f 33%,#0ff 50%,#0f0 67%,#ff0 83%,#f00 100%)"></div>
<div class="a" style="left:1185.500px;top:805px;width:19px;height:19px;border-radius:50%;background:#7a00ff;border:3px solid #f4f0ff;box-shadow:0 0 2px #888"></div>
<div class="in" style="left:1083px;width:59.500px">34</div>
<div class="in" style="left:1151px;width:59.500px">26</div>
<div class="in" style="left:1219.500px;width:58px">44</div>
<div class="t" style="left:1111px;top:896px;font-size:14px;color:#111">R</div>
<div class="t" style="left:1177px;top:896px;font-size:14px;color:#111">G</div>
<div class="t" style="left:1242px;top:896px;font-size:14px;color:#111">B</div>
<svg class="a" style="left:1279px;top:890px" width="8" height="12"><path d="M1 4.500L4 1.500 7 4.500M1 7.500L4 10.500 7 7.500" fill="none" stroke="#555"/></svg>

<!-- Tooltip -->
<div class="a" style="left:1040px;top:943px;width:184px;height:29px;background:#000;border-radius:4px"></div>
<svg class="a" style="left:1124px;top:972px" width="14" height="7"><path d="M0 0h14L7 7z" fill="#000"/></svg>
<div class="t n" style="left:1048px;top:957px;font-size:14.500px;color:#fff;letter-spacing:-.33px">translucent - Opacity: 93%</div>
</body></html>
